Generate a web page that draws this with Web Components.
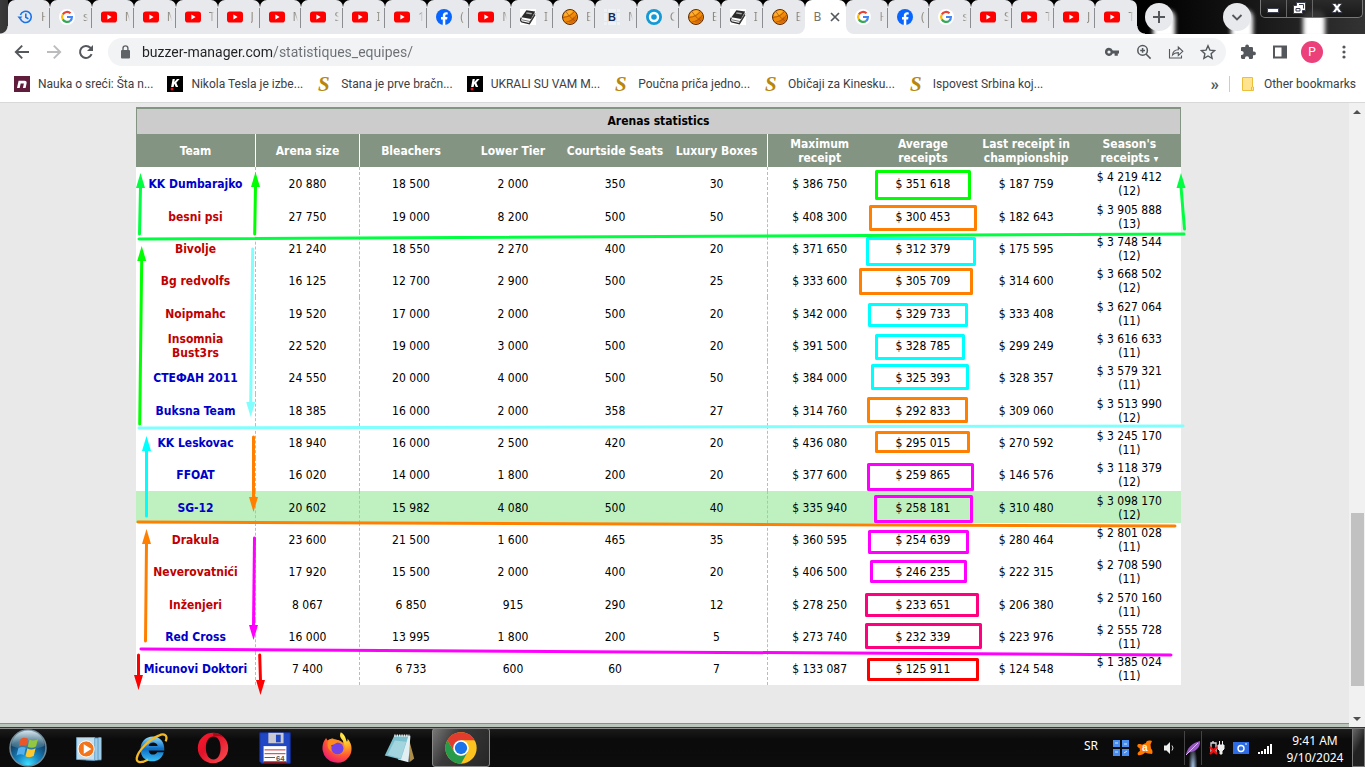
<!DOCTYPE html>
<html lang="en">
<head>
<meta charset="utf-8">
<title>Buzzer Manager - Arenas statistics</title>
<style>
html,body{height:100%;margin:0}
body{overflow:hidden;font-family:"Noto Sans","Open Sans",sans-serif}
</style>
</head>
<body>
<desktop-screen></desktop-screen>
<script>
const ICONS = {
  history:`<svg viewBox="0 0 16 16"><g fill="none" stroke="#1a73e8" stroke-width="1.6"><path d="M3.3 9.5A5.6 5.6 0 1 0 3.4 6"/><path d="M8.8 4.6v3.7l2.6 1.6"/></g><path d="M.4 7.6h5L2.9 10.4z" fill="#1a73e8"/></svg>`,
  google:`<svg viewBox="0 0 16 16"><circle cx="8" cy="8" r="8" fill="#fff"/><g fill="none" stroke-width="2.2"><path d="M11.5 4.2A4.9 4.9 0 0 0 3.8 5.6" stroke="#ea4335"/><path d="M3.8 5.5a4.9 4.9 0 0 0 0 5" stroke="#fbbc05"/><path d="M3.8 10.4a4.9 4.9 0 0 0 7.4 1.4" stroke="#34a853"/><path d="M8 8h4.9a4.9 4.9 0 0 1-1.7 3.8" stroke="#4285f4"/></g></svg>`,
  youtube:`<svg viewBox="0 0 16 16"><rect y="2.4" width="16" height="11.2" rx="2.8" fill="#f00"/><path d="M6.4 5.6v4.8L10.6 8z" fill="#fff"/></svg>`,
  facebook:`<svg viewBox="0 0 16 16"><circle cx="8" cy="8" r="8" fill="#0866ff"/><path d="M6.8 16v-5.5H5V8h1.8V6.8c0-2.4 1.1-3.6 3.4-3.6.5 0 1.1.1 1.5.2v2.1h-1c-1 0-1.4.4-1.4 1.4V8h2.2l-.4 2.5H9.3V16z" fill="#fff"/></svg>`,
  book:`<svg viewBox="0 0 16 16"><path fill="#fff" d="M0 0h16v16H0z"/><path d="M6.4 1.2 15.2 2.6 11 10 1.4 8.2z" fill="#2b2b2b"/><path d="M6.6 3.2l5.4.8-.7 1.4-5.5-.9z" fill="#aaa"/><path d="M1.4 8.6C.2 10.4.5 12.2 1.6 12.8l7.8 1.9L15 5.6" fill="none" stroke="#2b2b2b" stroke-width="1.3"/><path d="M2 10.8l8.1 1.7L15.2 4" fill="none" stroke="#555" stroke-width=".8"/></svg>`,
  ball:`<svg viewBox="0 0 16 16"><circle cx="8" cy="8" r="7.500" fill="#f08a0a" stroke="#5b2c06" stroke-width="1"/><path d="M2 6a6.500 6.500 0 0 1 9-4C9 5 6 7 2 7z" fill="#ffb02a"/><path d="M9 14.500c3-.5 5.500-3 5.500-6l-3-1C10.500 10 9 12 6 13z" fill="#d96c04"/><g fill="none" stroke="#9c4a04" stroke-width=".7"><path d="M1 8.500C6 8 10 6 12.300 2.500M3 13.500c5-1 9.500-4 11.500-7.500M4 2.600c2 3 5 7 9.400 9.500"/></g></svg>`,
  bsite:`<svg viewBox="0 0 16 16"><path fill="#eef1f5" d="M0 0h16v16H0z"/><path d="M0 3.500h16M0 12.500h16M3.500 0v16M12.500 0v16" stroke="#dde3e9" stroke-width=".8"/><text x="4" y="12" font-family="Liberation Sans" font-weight="700" font-size="11" fill="#14285a">B</text></svg>`,
  ring:`<svg viewBox="0 0 16 16"><circle cx="8" cy="8" r="8" fill="#139ad6"/><circle cx="8" cy="8" r="4" fill="none" stroke="#fff" stroke-width="2.400"/></svg>`,
  n:`<svg viewBox="0 0 16 16"><path fill="#5f1d3b" d="M0 0h16v16H0z"/><path d="M3 12 4.600 4.800h5.800c2 0 2.500 1 2.200 2.500L11.600 12H8.900l1-4.600H6.700L5.700 12z" fill="#fff"/></svg>`,
  k:`<svg viewBox="0 0 16 16"><path fill="#000" d="M0 0h16v16H0z"/><path d="M5.600 3h2.300l-.6 3L10 3h2.600L9.300 6.700 11.200 11H8.800L7.300 7.700 6.600 11H4.100z" fill="#fff"/><circle cx="5" cy="13" r="1.500" fill="#e10f1c"/></svg>`,
  s:`<svg viewBox="0 0 16 16" overflow="visible"><text x="1" y="15" font-family="Liberation Serif" font-weight="700" font-style="italic" font-size="21" fill="#b8860b">S</text></svg>`,
  folder:`<svg viewBox="0 0 16 16"><path d="M2.500 1.500h10v9.500h1v3.500h-11z" fill="#ffe38f" stroke="#eabf3c"/><path d="M11.500 14v-3" stroke="#eabf3c"/></svg>`,
  back:`<svg viewBox="0 0 16 16"><path d="M15 8H2M8.200 1.600 1.800 8l6.400 6.400" fill="none" stroke="#54585d" stroke-width="1.900"/></svg>`,
  forward:`<svg viewBox="0 0 16 16"><path d="M1 8h13M7.800 1.600 14.200 8l-6.400 6.400" fill="none" stroke="#babcbe" stroke-width="1.900"/></svg>`,
  reload:`<svg viewBox="0 0 16 16"><path d="M13.600 10.200A6 6 0 1 1 12.400 3.800L14 5.400" fill="none" stroke="#54585d" stroke-width="2"/><path d="M15 1v6H9z" fill="#54585d"/></svg>`,
  lock:`<svg viewBox="0 0 16 16"><rect x="4" y="6" width="9" height="8.500" rx="1" fill="#5f6368"/><path d="M6 6.500V4.300a2.400 2.400 0 0 1 4.900 0v2.200" fill="none" stroke="#5f6368" stroke-width="1.400"/></svg>`,
  key:`<svg viewBox="0 0 16 16"><path d="M5 3.800a4.100 4.100 0 0 1 3.800 2.600H15v3.200h-1.200v2.100h-3.200V9.600H8.800A4.100 4.100 0 1 1 5 3.800zm0 2.600a1.600 1.600 0 1 0 0 3.200 1.600 1.600 0 0 0 0-3.200z" fill="#54585d" fill-rule="evenodd"/></svg>`,
  zoom:`<svg viewBox="0 0 16 16"><g fill="none" stroke="#54585d" stroke-width="1.500"><circle cx="6.600" cy="6.400" r="4.800"/><path d="m10 10 4.600 4.600M6.600 4v4.800M4.200 6.400H9"/></g></svg>`,
  share:`<svg viewBox="0 0 16 16"><g fill="none" stroke="#54585d" stroke-width="1.100"><path d="M1.500 5v9h12v-2.500"/><path d="M4.500 11c.4-3.600 2.500-5.200 5.800-5.300V3l4.500 4.300-4.500 4.200V8.600c-2.600 0-4.400.7-5.800 2.400z"/></g></svg>`,
  star:`<svg viewBox="0 0 16 16"><path d="m8 1.800 1.900 4.300 4.700.4-3.500 3.200 1 4.700L8 12l-4.100 2.400 1-4.700L1.400 6.500l4.700-.4z" fill="none" stroke="#54585d" stroke-width="1.400"/></svg>`,
  puzzle:`<svg viewBox="0 0 16 16"><path d="M14 7.500h-1V4.300c0-.7-.6-1.200-1.200-1.200H9V2.500a1.900 1.900 0 1 0-3.800 0v.6H2.300c-.7 0-1.300.5-1.300 1.200v2.600h.6a2.100 2.100 0 0 1 0 4.200H1v2.700c0 .7.600 1.200 1.300 1.200h2.600v-.6a2.100 2.100 0 0 1 4.200 0v.6h2.700c.7 0 1.200-.5 1.200-1.200v-2.500h1a1.900 1.900 0 1 0 0-3.800z" fill="#54585d"/></svg>`,
  panel:`<svg viewBox="0 0 16 16"><path d="M1 1.500h14v13H1zM3 3.500v9h6.500v-9z" fill="#54585d" fill-rule="evenodd"/></svg>`,
  dots:`<svg viewBox="0 0 16 16"><g fill="#54585d"><circle cx="8" cy="3" r="1.600"/><circle cx="8" cy="8" r="1.600"/><circle cx="8" cy="13" r="1.600"/></g></svg>`,
  close:`<svg viewBox="0 0 16 16"><path d="m4 4 8 8m0-8-8 8" stroke="#54585d" stroke-width="1.700"/></svg>`,
  plus:`<svg viewBox="0 0 16 16"><path d="M8 2v12M2 8h12" stroke="#54585d" stroke-width="2"/></svg>`,
  chevron:`<svg viewBox="0 0 16 16"><path d="m3.500 6 4.500 4.500L12.500 6" fill="none" stroke="#54585d" stroke-width="1.800"/></svg>`,
  min:`<svg viewBox="0 0 16 16"><path d="M2.500 7.500h11v4h-11z" fill="#fff" stroke="#3c4050"/></svg>`,
  restore:`<svg viewBox="0 0 16 16"><path d="M5.500 1.500h9v8h-3v3h-9v-8h3z" fill="#fff" stroke="#3c4050"/><path d="M5 7.500h4v2.500H5zM8 3.500h4.500v4" fill="none" stroke="#3c4050"/></svg>`,
  winclose:`<svg viewBox="0 0 16 16"><path d="M3 2.500h3.500L8 4.500l1.500-2H13L9.800 7l3.200 4.500H9.500L8 9.500l-1.500 2H3L6.200 7z" fill="#fff" stroke="#3c4050"/></svg>`,
  start:`<svg viewBox="0 0 40 40"><defs><radialGradient id="a" cx=".5" cy=".95" r=".9"><stop offset="0" stop-color="#3fe0ff"/><stop offset=".35" stop-color="#1687c4"/><stop offset=".75" stop-color="#123f66"/><stop offset="1" stop-color="#3c5d78"/></radialGradient><linearGradient id="b" x2="0" y2="1"><stop stop-color="#e8f4fa" stop-opacity=".9"/><stop offset="1" stop-color="#9cc" stop-opacity=".15"/></linearGradient></defs><circle cx="20" cy="20" r="18" fill="url(#a)" stroke="#718b99" stroke-width="1.500"/><path d="M3.500 18a16.500 15.500 0 0 1 33 0c-9 4-23 4-33 0z" fill="url(#b)"/><path d="M12.500 11c3-2 5-1.500 7.500-.3L18.300 18c-2.500-1-5-1-7.500.5z" fill="#e8562a"/><path d="M21.500 11.500c3 1.300 5.500 1.300 8.500-.5L28 18.500c-2.800 1.600-5.300 1.600-8.300.2z" fill="#93c641"/><path d="M10.300 20.300c2.700-1.500 5-1.500 7.500-.5L16 27c-2.500-1-4.700-1-7.500.5z" fill="#55b0ee"/><path d="M19.300 20.500c2.800 1.300 5.500 1.300 8.300-.3L25.700 28c-2.700 1.500-5.400 1.500-8.200.2z" fill="#fdc930"/></svg>`,
  wmp:`<svg viewBox="0 0 40 40"><path d="M17 9h16v24H17z" fill="#5d9cc5"/><path d="M30 9h3v23h-3zM26 10h3v23h-3z" fill="#9dcbe8"/><path d="M7 9h19v24l-19-1z" fill="#c4e0f0" stroke="#6aa7cc"/><circle cx="17" cy="21" r="8.500" fill="#f2751c" stroke="#fff"/><path d="M14.500 16v10l8-5z" fill="#fff"/></svg>`,
  ie:`<svg viewBox="0 0 40 40"><defs><linearGradient id="a" x2="0" y2="1"><stop stop-color="#8fdcff"/><stop offset=".5" stop-color="#0a6cc4"/><stop offset="1" stop-color="#3cc0f5"/></linearGradient></defs><path d="M34 22.500H17.500c.3 5 7 6 9 2h7c-2 7-7 9.500-12 9.500C13.500 34 9 28.500 9 21.500 9 13.500 14.500 8 22 8c7.500 0 12.500 6 12 14.500zM17.500 18h9.500c-.5-5-9-5-9.500 0z" fill="url(#a)" fill-rule="evenodd"/><path d="M35.500 13C38 6.500 34 4 28 7 18 11 6.500 23 5 30.500c-.8 6 6 5 12 1.500" fill="none" stroke="#f5b928" stroke-width="2.400"/></svg>`,
  opera:`<svg viewBox="0 0 40 40"><defs><linearGradient id="a" x2="1" y2="1"><stop stop-color="#ff1b2d"/><stop offset=".4" stop-color="#e0122a"/><stop offset="1" stop-color="#ff5252"/></linearGradient></defs><path d="M20 4a16 16 0 1 0 0 32 16 16 0 0 0 0-32zm.5 4c5 0 7.500 5.500 7.500 12s-2.500 12-7.500 12-8-5-8-12 3-12 8-12z" fill="url(#a)" fill-rule="evenodd"/><path d="M20 4c5 0 9 2 11.500 5.500-4-3.500-8-2-11-1.500z" fill="#a40d18"/></svg>`,
  floppy:`<svg viewBox="0 0 40 40"><path d="M4 4h32v32H6l-2-2z" fill="#2148c4" stroke="#1130a0"/><path d="M13 4h16v11H13z" fill="#c9c9d2"/><path d="M21 6h5v8h-5z" fill="#2148c4"/><path d="M8 18h24v17H8z" fill="#fff"/><path d="M9 22h22M9 26h22M9 30h11" stroke="#c82333"/><path d="M8 34h24v2H8z" fill="#8b1a2b"/><text x="21" y="34" font-family="Liberation Sans" font-weight="700" font-size="8" fill="#555">64</text></svg>`,
  firefox:`<svg viewBox="0 0 40 40"><defs><radialGradient id="a" cx=".75" cy=".12" r="1"><stop stop-color="#fff44f"/><stop offset=".35" stop-color="#ffae26"/><stop offset=".65" stop-color="#ff5634"/><stop offset="1" stop-color="#e9127b"/></radialGradient></defs><path d="M24 3.500c5 3 5 7 6.500 10 .8-1.500.7-2.500.5-3.500 5.500 6 5.500 14 1.500 19.500A15.500 15.500 0 0 1 5 23c-1-5 .5-10 3.500-13.500L10 12c2-1.500 4-2 6.500-2-1.500 1-2.500 2-2.500 3h5c-1 3-4 3-5 5 6 6 15 0 12-6-2-2.500-4-4.500-2-8.500z" fill="url(#a)"/><path d="M18 12c4-1 9 1 10 6 1 6-3 9-7 9-5 0-7-4-7-7z" fill="#ff8b2a"/><circle cx="20.500" cy="20.500" r="6.300" fill="#7542e5"/><path d="M11 12c4-2.500 9-1.500 12 1-4 1-4 3-9 4-1 2-1 5 1 7-5-2-6-8-4-12z" fill="#ff8a1f"/></svg>`,
  notepad:`<svg viewBox="0 0 40 40"><path d="M30 9 36 31l-5 4z" fill="#ad8d4a"/><path d="M16 7h16l-2 28-11-3z" fill="#e1eef2"/><path d="M15 7h15l-8 25L5 28z" fill="#7cc0cd"/><path d="m15.500 12 12 1.500L22 31 8 27z" fill="#bde3e8" opacity=".6"/><path d="M15 7h16" stroke="#eee" stroke-width="2.500" stroke-dasharray="1.500 1"/></svg>`,
  chrome:`<svg viewBox="0 0 40 40"><circle cx="20" cy="20" r="16.500" fill="#fcc31e"/><path d="M5.700 11.750A16.500 16.500 0 0 1 34.300 11.750H20L12.900 24z" fill="#e33b2e"/><path d="M5.700 11.750A16.500 16.500 0 0 0 20 36.500L27.100 24 20 20l-7.100 4z" fill="#279b4a"/><circle cx="20" cy="20" r="8.200" fill="#fff"/><circle cx="20" cy="20" r="6.500" fill="#1a73e8"/></svg>`,
  grid:`<svg viewBox="0 0 16 16"><g fill="#4a8df0"><path d="M0 0h7v7H0zM9 0h7v7H9zM0 9h7v7H0zM9 9h7v7H9z"/></g><path d="M2 3h3M11 4h3M2 12h3M11 13l3-2" stroke="#cfe2ff"/></svg>`,
  avast:`<svg viewBox="0 0 16 16"><path d="M9 3C9 1 11 0 15 1l-1.500 3.500.5 4C15.500 10 16 12 15 14l-4-.5L8 12.500C6 15 3 15.500 1 15c-1-1.500 0-3 2-4L2.500 8C0 7.500-.5 5 1.500 4 4 3.500 5 5.500 6.500 4z" fill="#ff7800"/><text x="5" y="11" font-family="Liberation Sans" font-weight="700" font-size="10" fill="#fff">a</text></svg>`,
  sound:`<svg viewBox="0 0 16 16"><path d="M3 5.500h2.500L9 2v12l-3.500-3.500H3z" fill="#eee"/><path d="M11 5.500q2 2.500 0 5" fill="none" stroke="#ddd"/></svg>`,
  feather:`<svg viewBox="0 0 16 16"><path d="M1 15C2 8 7 3 15 1c.5 6-4 11-11 11.500z" fill="#9b59c9"/><path d="M1 15 13 3" stroke="#e0b4ff"/></svg>`,
  plug:`<svg viewBox="0 0 16 16"><path d="M7 13V3H2v9M4 1v2" fill="none" stroke="#ddd" stroke-width="1.300"/><path d="M9 5h6v4l-2 2v3h-2v-3L9 9zM10.500 1v4M13.500 1v4" fill="#eee" stroke="#eee"/><path d="m1 7 7 7m0-7-7 7" stroke="#e11" stroke-width="2.200"/></svg>`,
  camera:`<svg viewBox="0 0 16 16"><path d="M0 2h16v12H0z" fill="#2d6ce4"/><circle cx="8" cy="8.500" r="3" fill="none" stroke="#fff" stroke-width="1.400"/><path d="M12 4h2" stroke="#fff"/></svg>`,
  signal:`<svg viewBox="0 0 16 16"><path d="M2 14v-2M5 14v-3M8 14V9M11 14V6M14 14V4" stroke="#fff" stroke-width="2"/></svg>`
};

const define = (name, html, setup) => {
  const template = document.createElement('template');
  template.innerHTML = html;
  customElements.define(name, class extends HTMLElement {
    connectedCallback() {
      if (this.shadowRoot) return;
      const root = this.attachShadow({mode: 'open'});
      root.append(template.content.cloneNode(true));
      if (setup) setup(root, this);
    }
  });
};

define('ui-icon', `<style>:host{display:block;flex:none;width:var(--icon-size,16px);height:var(--icon-size,16px)}svg{display:block;width:100%;height:100%}</style>`,
  (root, host) => root.querySelector('style').insertAdjacentHTML('afterend', ICONS[host.getAttribute('name')]));

define('browser-tab', `<style>
:host{display:block;flex:1 1 0;min-width:0;height:34px;position:relative}
button{box-sizing:border-box;display:flex;align-items:center;gap:8px;width:100%;height:100%;margin:0;padding:0 0 0 9px;border:0;border-radius:7px 7px 0 0;background:#e8e9ed;font:12px "Noto Sans",sans-serif;text-align:left}
.label{white-space:nowrap;line-height:18px;color:transparent;background:linear-gradient(90deg,#8f8a80 2px,transparent 5px);-webkit-background-clip:text;background-clip:text}
:host::after{content:"";position:absolute;right:0;top:8px;width:1px;height:20px;background:#8b8d91}
:host([bare])::after,:host([active])::after{display:none}
:host([before]) button{border-bottom-right-radius:8px}
:host([after]) button{border-bottom-left-radius:8px}
:host([active]) button{background:#fff;gap:6px}
:host([active]) .label{color:#77736c;background:none}
</style><button role="tab"><slot></slot></button>`, (root, host) => {
  const icon = host.getAttribute('icon'), label = `<span class="label">${host.getAttribute('label')}</span>`;
  root.querySelector('button').innerHTML = host.hasAttribute('active')
    ? label + '<ui-icon name="close"></ui-icon>' : `<ui-icon name="${icon}"></ui-icon>` + label;
});

define('tab-strip', `<style>
:host{display:flex;height:34px;background:linear-gradient(90deg,#3a3a3a 0,#000 6%,#000 84%,#141414 91%,#333 100%);align-items:stretch}
.tabs{display:flex;flex:1;min-width:0;background:linear-gradient(#000 50%,#fff 50%)}
browser-tab:nth-child(n+21){flex-grow:.99}
.lead{width:8px;background:radial-gradient(circle at 0 0,transparent 7px,#e8e9ed 8px) bottom/8px 8px no-repeat}
.tail{display:flex;position:relative;width:228px}
.flare{width:8px;background:radial-gradient(circle at 8px 0,transparent 7px,#e8e9ed 8px) bottom/8px 8px no-repeat}
.round{position:absolute;top:3px;width:28px;height:28px;border:0;border-radius:50%;padding:6px;background:#e8e9ed}
.new{left:8px}.more{left:86px}
.glow{position:absolute;top:10px;width:22px;height:28px;border-radius:8px 8px 0 0;background:#fff;filter:blur(2px)}
.clip{position:absolute;inset:0;overflow:hidden}
.g1{left:16px}.g2{left:94px}.g3{left:166px}
.window{position:absolute;right:2px;top:0;display:flex;width:103px;height:18px;border:1px solid #777;border-top:0;border-radius:0 0 5px 5px;box-sizing:border-box;overflow:hidden;background:linear-gradient(#2a2a2aee,#161616dd)}
.window button{display:flex;justify-content:center;align-items:center;flex:1;margin:0;padding:0;border:0;border-right:1px solid #666;background:none}
.window .x{flex:2;border:0}
</style><div class="lead"></div><div class="tabs" role="tablist"></div><div class="tail"><div class="flare"></div>
<div class="clip"><i class="glow g1"></i><i class="glow g2"></i><i class="glow g3"></i></div>
<button class="round new" aria-label="New tab"><ui-icon name="plus"></ui-icon></button><button class="round more" aria-label="Search tabs"><ui-icon name="chevron"></ui-icon></button>
<div class="window"><button aria-label="Minimize"><ui-icon name="min"></ui-icon></button><button aria-label="Restore"><ui-icon name="restore"></ui-icon></button><button class="x" aria-label="Close"><ui-icon name="winclose"></ui-icon></button></div></div>`, root => {
  const Y = 'youtube';
  const tabs = [['history','H'],['google','s'],[Y,'M'],[Y,'M'],[Y,'T'],[Y,'J'],[Y,'M'],[Y,'S'],[Y,'I'],[Y,'1'],['facebook','('],[Y,'M'],['book','I'],['ball','B'],['bsite','M'],['ring','C'],['ball','B'],['book','I'],['ball','B','bare before'],['','B','active'],['google','H','after'],['facebook','('],['google','s'],[Y,'S'],[Y,'T'],[Y,'J'],[Y,'T','bare']];
  root.querySelector('.tabs').innerHTML = tabs.map(([i, l, f = '']) => `<browser-tab icon="${i}" label="${l}" ${f}></browser-tab>`).join('');
});

define('nav-toolbar', `<style>
:host{display:flex;align-items:center;height:36px;padding:0 13px 0 14px;background:#fff}
button{display:block;margin:0;padding:0;border:0;background:none}
.nav{display:flex;gap:16px;margin-right:14px}
.box{display:flex;flex:1;align-items:center;height:28px;border-radius:14px;background:#f1f3f4;padding:0 10px 0 9px}
.box>ui-icon{margin:0 9px 0 0}
input{flex:1;min-width:0;height:24px;border:0;outline:0;padding:0;font:14px Roboto,sans-serif;color:transparent;background:linear-gradient(90deg,#202124 131px,#6b6f74 131px);-webkit-background-clip:text;background-clip:text}
.acts{display:flex;gap:16px}
.right{display:flex;align-items:center;gap:16px;margin-left:14px}
.avatar{width:22px;height:22px;margin:0 -3px;border-radius:50%;background:#ec407a;color:#fff;font:12px Roboto,sans-serif}
</style><div class="nav"><button aria-label="Back"><ui-icon name="back"></ui-icon></button><button aria-label="Forward"><ui-icon name="forward"></ui-icon></button><button aria-label="Reload"><ui-icon name="reload"></ui-icon></button></div>
<div class="box"><ui-icon name="lock"></ui-icon><input aria-label="Address" value="buzzer-manager.com/statistiques_equipes/"><div class="acts"><button aria-label="Passwords"><ui-icon name="key"></ui-icon></button><button aria-label="Zoom"><ui-icon name="zoom"></ui-icon></button><button aria-label="Share"><ui-icon name="share"></ui-icon></button><button aria-label="Bookmark"><ui-icon name="star"></ui-icon></button></div></div>
<div class="right"><button aria-label="Extensions"><ui-icon name="puzzle"></ui-icon></button><button aria-label="Side panel"><ui-icon name="panel"></ui-icon></button><button class="avatar">P</button><button aria-label="Menu"><ui-icon name="dots"></ui-icon></button></div>`);

define('bookmark-link', `<style>:host{display:block;flex:none}a{display:flex;align-items:center;gap:8px;color:#3c4043;text-decoration:none;font:12px/16px Roboto,sans-serif;white-space:nowrap}</style><a href="#"><slot name="icon"></slot><span><slot></slot></span></a>`);

define('bookmarks-bar', `<style>
:host{display:flex;align-items:center;height:33px;padding:0 9px 4px 14px;background:#fff;border-bottom:1px solid #d8d8d8;box-sizing:border-box}
.items{display:flex;flex:1;min-width:0;gap:14px}
.more{border:0;background:none;padding:0;margin:0 10px 0 0;color:#54585d;font:700 17px/16px Roboto,sans-serif}
hr{width:1px;height:16px;border:0;background:#ccc;margin:0 10px 0 0}
</style><nav class="items"></nav><button class="more" aria-label="More bookmarks">»</button><hr><bookmark-link><ui-icon slot="icon" name="folder"></ui-icon>Other bookmarks</bookmark-link>`, root => {
  root.querySelector('.items').innerHTML = [['n','Nauka o sreći: Šta n...'],['k','Nikola Tesla je izbe...'],['s','Stana je prve bračn...'],['k','UKRALI SU VAM M...'],['s','Poučna priča jedno...'],['s','Običaji za Kinesku...'],['s','Ispovest Srbina koj...']]
    .map(([i, t]) => `<bookmark-link><ui-icon slot="icon" name="${i}"></ui-icon>${t}</bookmark-link>`).join('');
});

define('arena-table', `<style>
:host{display:block;font:12px/14px "DejaVu Sans Condensed","DejaVu Sans",sans-serif;color:#000}
table{width:100%;table-layout:fixed;border-collapse:separate;border-spacing:0;background:#fff}
caption{box-sizing:border-box;height:27px;padding:5px 0;border:1px solid #849482;border-top-width:2px;border-bottom:0;background:#ccc;font-weight:700}
.team{width:120px}.arena{width:104px}.seat{width:102px}
th{height:33px;padding:0;background:#849482;color:#fff}
td{height:30px;padding:2px 0 0;text-align:center}
tbody tr:nth-child(3n+1) td{padding-bottom:1px}
td:nth-child(1),td:nth-child(2),td:nth-child(6){border-right:1px dashed #bbb}
th:nth-child(1),th:nth-child(2),th:nth-child(6){border-right:1px solid #fff}
.mine td{background:#bff0bf}
a{color:#c00000;font-weight:700;text-decoration:none}
a.online{color:#0000c8}
th small{font-size:10px;line-height:10px}
</style><table><caption>Arenas statistics</caption><colgroup><col class="team"><col class="arena"><col class="seat"><col class="seat"><col class="seat"><col class="seat"><col><col><col><col></colgroup>
<thead><tr><th>Team</th><th>Arena size</th><th>Bleachers</th><th>Lower Tier</th><th>Courtside Seats</th><th>Luxury Boxes</th><th>Maximum<br>receipt</th><th>Average<br>receipts</th><th>Last receipt in<br>championship</th><th>Season's<br>receipts <small>▾</small></th></tr></thead><tbody></tbody></table>`, root => {
  const rows = `+KK Dumbarajko|20 880|18 500|2 000|350|30|386 750|351 618|187 759|4 219 412|12
besni psi|27 750|19 000|8 200|500|50|408 300|300 453|182 643|3 905 888|13
Bivolje|21 240|18 550|2 270|400|20|371 650|312 379|175 595|3 748 544|12
Bg redvolfs|16 125|12 700|2 900|500|25|333 600|305 709|314 600|3 668 502|12
Noipmahc|19 520|17 000|2 000|500|20|342 000|329 733|333 408|3 627 064|11
Insomnia<br>Bust3rs|22 520|19 000|3 000|500|20|391 500|328 785|299 249|3 616 633|11
+СТЕФАН 2011|24 550|20 000|4 000|500|50|384 000|325 393|328 357|3 579 321|11
+Buksna Team|18 385|16 000|2 000|358|27|314 760|292 833|309 060|3 513 990|12
+KK Leskovac|18 940|16 000|2 500|420|20|436 080|295 015|270 592|3 245 170|11
+FFOAT|16 020|14 000|1 800|200|20|377 600|259 865|146 576|3 118 379|12
+SG-12|20 602|15 982|4 080|500|40|335 940|258 181|310 480|3 098 170|12
Drakula|23 600|21 500|1 600|465|35|360 595|254 639|280 464|2 801 028|11
Neverovatnići|17 920|15 500|2 000|400|20|406 500|246 235|222 315|2 708 590|11
Inženjeri|8 067|6 850|915|290|12|278 250|233 651|206 380|2 570 160|11
+Red Cross|16 000|13 995|1 800|200|5|273 740|232 339|223 976|2 555 728|11
+Micunovi Doktori|7 400|6 733|600|60|7|133 087|125 911|124 548|1 385 024|11`.split('\n').map(r => r.split('|'));
  root.querySelector('tbody').innerHTML = rows.map(([team, ...c]) => {
    const online = team[0] === '+', name = online ? team.slice(1) : team;
    return `<tr${name === 'SG-12' ? ' class="mine"' : ''}><td><a href="#"${online ? ' class="online"' : ''}>${name}</a></td>` +
      c.slice(0, 9).map((v, i) => `<td>${i > 4 ? '$ ' : ''}${v}${i === 8 ? `<br>(${c[9]})` : ''}</td>`).join('') + '</tr>';
  }).join('');
});

/* Freehand marks drawn over the table: dividing lines, arrows and frames. */
define('marker-layer', `<style>:host{display:block;position:absolute;inset:0;pointer-events:none}svg{display:block;width:100%;height:100%;overflow:visible}</style>`, root => {
  const G = '#00ff40', L = '#00ff00', C = '#00ffff', P = '#80ffff', O = '#ff8000', M = '#ff00ff', K = '#ff0080', R = '#ff0000';
  const lines = [[139,239,1184,234,G],[139,428,1183,426,P],[138,522,1175,526,O],[141,649,1171,655,M]];
  const arrows = [[139.500,234,140.500,173,G],[254.700,234,255.500,172,L],[1184.500,229,1181,173,G],[139.700,424,141.700,246,L],[252.700,249,250.700,417,P],[146.500,516,146.500,436,C],[253.500,437,253.500,512,O],[145.500,641,146.500,529,O],[254.500,538,253.500,640,M],[138.500,655,138.500,690,R],[259.700,655,260.500,695,R]];
  const boxes = [[875,170,971,200,L],[869,205,977,231,O],[866,237,976,266,C],[859,268,973,295,O],[868,303,968,327,C],[875,334,965,360,C],[871,364,969,390,C],[867,397,968,423,O],[875,431,970,453,O],[867,463,974,491,M],[874,495,973,523,M],[868,530,969,554,M],[870,560,967,583,M],[865,593,979,617,K],[865,623,982,649,K],[867,658,979,681,R]];
  const svg = lines.map(([a, b, c, d, k]) => `<path d="M${a} ${b}L${c} ${d}" stroke="${k}"/>`).join('') +
    arrows.map(([a, b, c, d, k]) => { const s = Math.sign(b - d); return `<path d="M${a} ${b}L${c} ${d + 14 * s}" stroke="${k}"/><path d="M${c} ${d}L${c - 4.500} ${d + 15 * s}H${c + 4.500}Z" fill="${k}" stroke="none"/>`; }).join('') +
    boxes.map(([a, b, c, d, k]) => `<rect x="${a + 1.500}" y="${b + 1.500}" width="${c - a - 3}" height="${d - b - 3}" stroke="${k}"/>`).join('');
  root.querySelector('style').insertAdjacentHTML('afterend', `<svg viewBox="136 107 1045 578" preserveAspectRatio="none" fill="none" stroke-width="3" stroke-linecap="round" stroke-linejoin="round">${svg}</svg>`);
});

define('page-scrollbar', `<style>
:host{display:flex;flex-direction:column;width:16px;flex:none;background:#f1f1f1}
button{height:17px;border:0;padding:0;background:none;display:flex;align-items:center;justify-content:center}
.up::before,.down::before{content:"";border:4px solid transparent;border-top:0;border-bottom:4px solid #505050}
.down::before{transform:rotate(180deg)}
.track{flex:1;display:flex;flex-direction:column}
.before{flex:393}.thumb{flex:173;margin:0 1px 0 2px;background:#c1c1c1}.after{flex:24}
</style><button class="up" aria-label="Scroll up"></button><div class="track"><div class="before"></div><div class="thumb"></div><div class="after"></div></div><button class="down" aria-label="Scroll down"></button>`);

define('page-view', `<style>
:host{display:flex;flex:1;min-height:0;background:#e9e9e9}
main{flex:1;min-width:0;display:flex;flex-direction:column;overflow:hidden}
.content{flex:1;padding:4px 168px 0 136px}
.sheet{position:relative}
footer{height:3px;flex:none;border-top:1px solid #849482;background:#bcc5bc}
</style><main><div class="content"><div class="sheet"><arena-table></arena-table><marker-layer></marker-layer></div></div><footer></footer></main><page-scrollbar></page-scrollbar>`);

define('task-bar', `<style>
:host{display:flex;align-items:stretch;height:40px;box-sizing:border-box;flex:none;background:linear-gradient(#1c1c1c,#0b0b0b 30%,#0c0c0c);border-top:1px solid #3a3438;box-shadow:inset 0 1px #8b8b8b;color:#fff;--icon-size:38px}
button{display:flex;align-items:center;justify-content:center;margin:0;padding:0;border:0;background:none;color:inherit;font:inherit}
.apps{display:flex;flex:1;gap:4px}
.apps button{width:58px}
.apps .start{width:56px;--icon-size:40px}
.apps .on{border:1px solid #888;border-radius:3px;background:linear-gradient(120deg,#777 0,#3a3a3a 35%,#262626);box-sizing:border-box}
.tray{display:flex;align-items:center;--icon-size:16px;font:12px/17px "Noto Sans",sans-serif}
.lang{margin:0 15px 4px 0}
.icons{display:flex;gap:8px}
.feather{background:radial-gradient(ellipse at 50% 100%,#a9c4e8,transparent 40%);box-shadow:-3px 0 0 -2px #444,3px 0 0 -2px #444}
.icons button{width:16px;height:38px}
.clock{width:74px;margin:3px 0 0 5px;text-align:center}
.show{width:13px;box-sizing:border-box;border:1px solid #777;background:linear-gradient(120deg,#666,#222 50%)}
</style><div class="apps"></div><div class="tray"><span class="lang">SR</span><div class="icons"></div><button class="clock">9:41 AM<br>9/10/2024</button></div><button class="show" aria-label="Show desktop"></button>`, root => {
  root.querySelector('.apps').innerHTML = ['start','wmp','ie','opera','floppy','firefox','notepad','chrome'].map(n => `<button aria-label="${n}" class="${n === 'start' ? 'start' : n === 'chrome' ? 'on' : ''}"><ui-icon name="${n}"></ui-icon></button>`).join('');
  root.querySelector('.icons').innerHTML = ['grid','avast','sound','feather','plug','camera','signal'].map(n => `<button aria-label="${n}" class="${n}"><ui-icon name="${n}"></ui-icon></button>`).join('');
});

define('desktop-screen', `<style>:host{display:flex;flex-direction:column;height:100vh;overflow:hidden}tab-strip,nav-toolbar,bookmarks-bar{flex:none}</style><tab-strip></tab-strip><nav-toolbar></nav-toolbar><bookmarks-bar></bookmarks-bar><page-view></page-view><task-bar></task-bar>`);
</script>
</body>
</html>
